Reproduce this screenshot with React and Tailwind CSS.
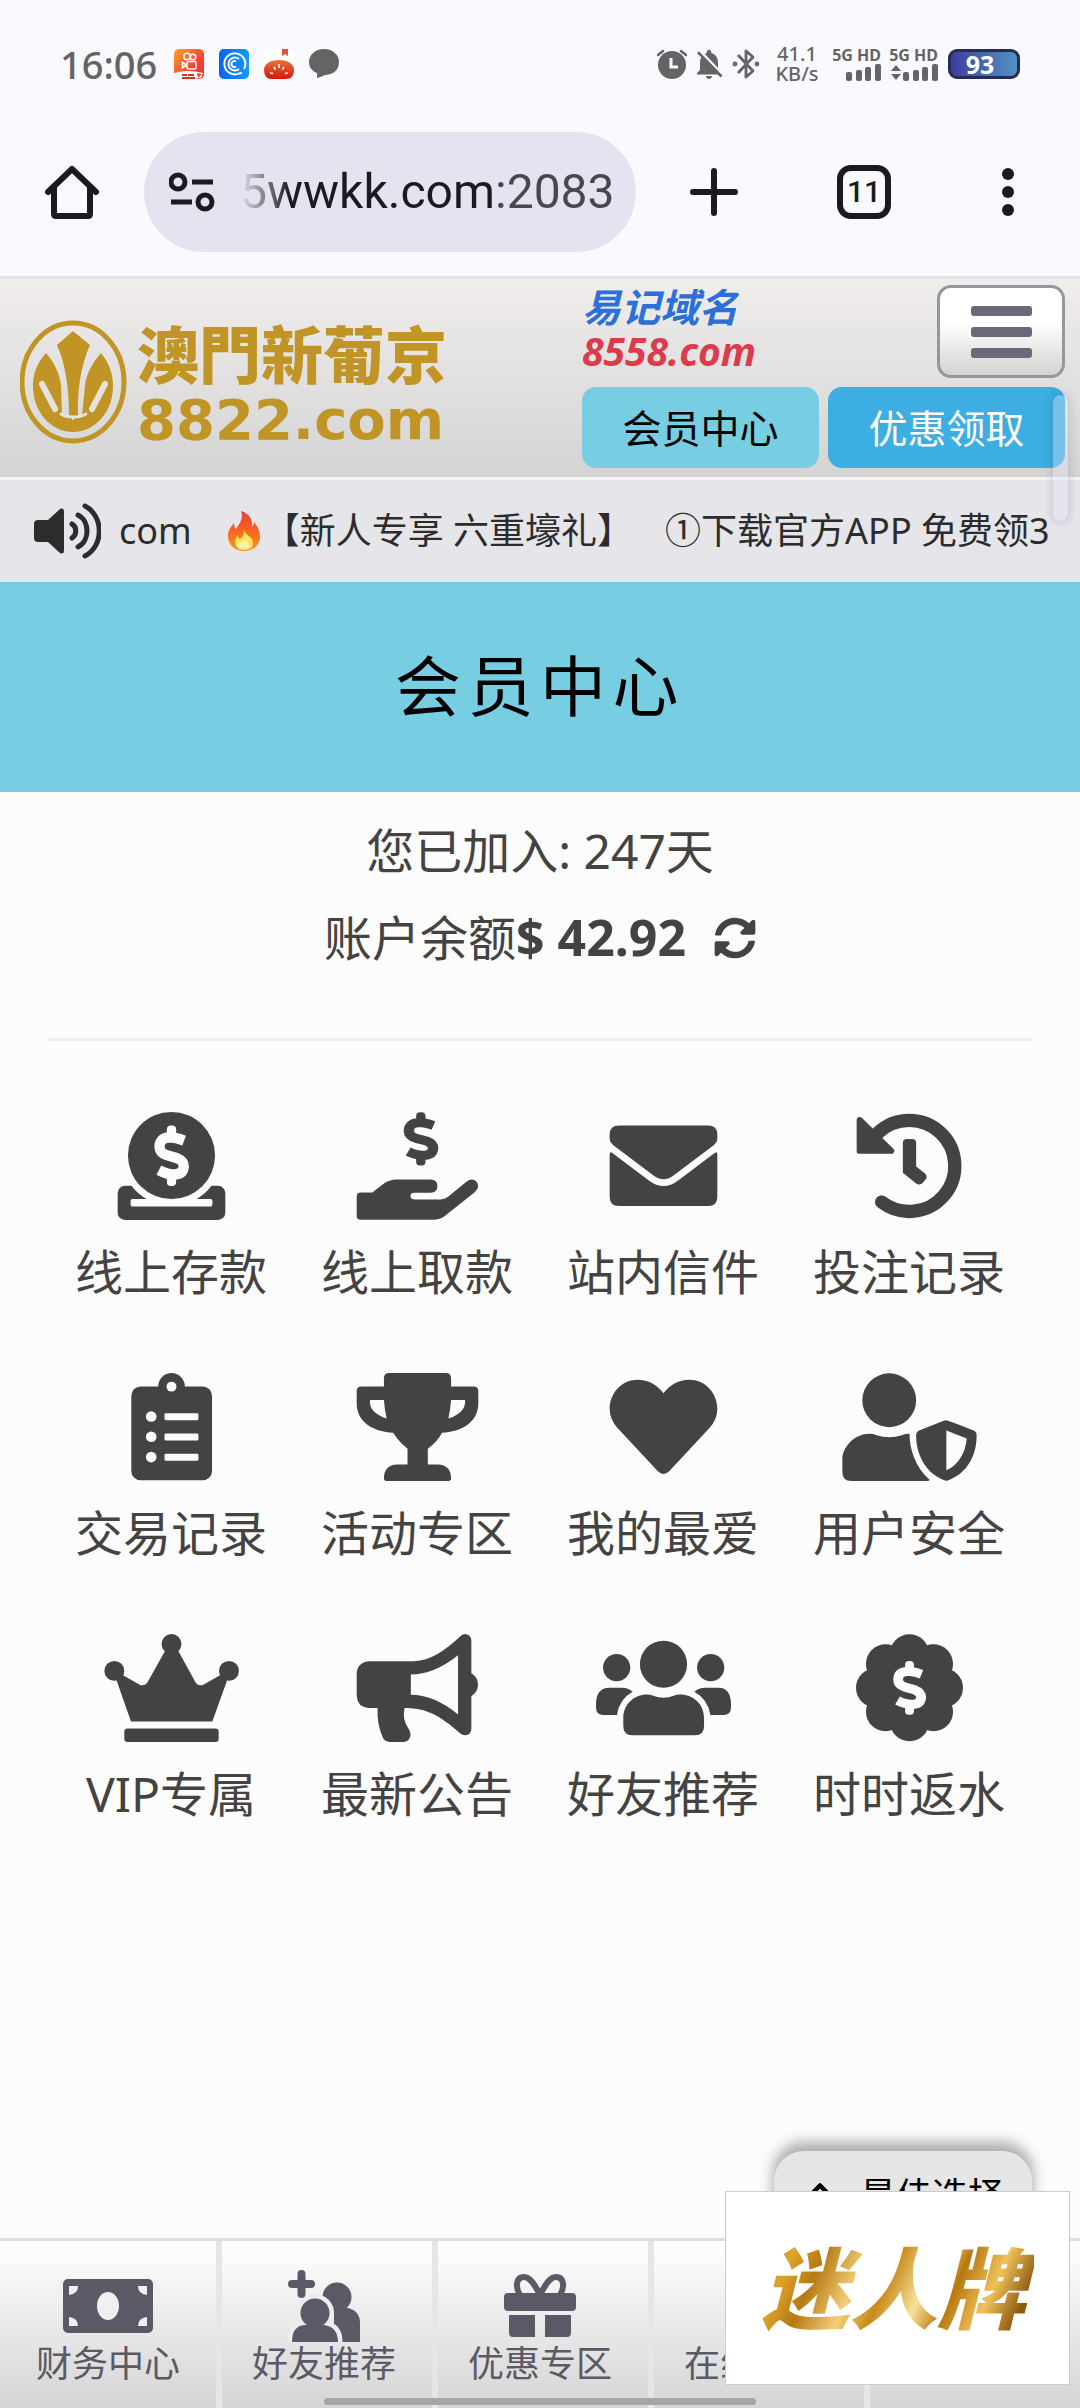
import { MdNotificationsOff } from "react-icons/md";
import { FaSyncAlt } from "react-icons/fa";
import { ChevronUp } from "lucide-react";

const PAPER = "#fcfcfc";

const DollarMark = ({ transform, color }) => (
  <g transform={transform} fill={color}>
    <rect x="-14" y="-91" width="28" height="40" rx="12" />
    <rect x="-14" y="51" width="28" height="40" rx="12" />
    <path
      d="M38 -46Q12 -56 -6 -56Q-36 -54 -36 -27Q-36 -10 -14 -2L17 7Q37 15 37 32Q35 56 6 56Q-14 56 -38 43"
      fill="none"
      stroke={color}
      strokeWidth="31"
    />
  </g>
);

const MenuIcon = ({ viewBox, children }) => (
  <svg viewBox={viewBox} className="h-[108px] w-[135px]" fill="currentColor" aria-hidden="true">
    {children}
  </svg>
);

const DepositIcon = () => (
  <MenuIcon viewBox="190 97 406 325">
    <rect x="231" y="319" width="324" height="103" rx="22" />
    <rect x="270" y="359" width="246" height="22" rx="5" fill={PAPER} />
    <circle cx="393" cy="228" r="151" fill={PAPER} />
    <circle cx="393" cy="228" r="131" />
    <DollarMark transform="translate(393 229)" color={PAPER} />
  </MenuIcon>
);

const WithdrawIcon = () => (
  <MenuIcon viewBox="928 97 406 325">
    <DollarMark transform="translate(1141 178) scale(1 0.88)" color="currentColor" />
    <path d="M948 351Q948 339 960 339H995L1028 314Q1046 300 1068 300H1170Q1191 300 1191 320Q1191 340 1170 340H1122Q1110 340 1110 350Q1110 360 1122 360H1200Q1212 360 1222 353L1279 306Q1296 294 1309 307Q1320 322 1304 338L1216 408Q1200 421 1183 421H960Q948 421 948 409Z" />
  </MenuIcon>
);

const MailIcon = () => (
  <MenuIcon viewBox="166 97 406 325">
    <path d="M207 165Q207 138 235 138H503Q531 138 531 165V178Q531 188 521 196L400 287Q369 311 338 287L217 196Q207 188 207 178Z" />
    <path d="M207 224Q207 214 216 221L325 303Q369 337 413 303L522 221Q531 214 531 224V352Q531 380 503 380H235Q207 380 207 352Z" />
  </MenuIcon>
);

const HistoryIcon = () => (
  <MenuIcon viewBox="904 97 406 325">
    <path
      d="M1023 368A137 137 0 1 0 1012 160"
      fill="none"
      stroke="currentColor"
      strokeWidth="40"
      strokeLinecap="round"
    />
    <path
      d="M957 121L1052 214H957Z"
      stroke="currentColor"
      strokeWidth="18"
      strokeLinejoin="round"
    />
    <path d="M1087 190Q1087 178 1099 178H1115Q1127 178 1127 190V261L1153 281Q1163 290 1155 301L1148 309Q1138 320 1127 312L1087 280Z" />
  </MenuIcon>
);

const RecordIcon = () => (
  <MenuIcon viewBox="190 880 406 325">
    <rect x="272" y="921" width="243" height="282" rx="28" />
    <circle cx="393" cy="920" r="40" />
    <circle cx="393" cy="921" r="15" fill={PAPER} />
    {[1011, 1072, 1133].map((y) => (
      <g key={y} fill={PAPER}>
        <circle cx="332" cy={y} r="16" />
        <rect x="372" y={y - 10} width="102" height="21" rx="4" />
      </g>
    ))}
  </MenuIcon>
);

const TrophyIcon = () => (
  <MenuIcon viewBox="928 880 406 325">
    <path d="M1030 896Q1030 880 1046 880H1216Q1232 880 1232 896V921H1300Q1314 921 1314 935V970C1314 1030 1262 1056 1205 1060Q1190 1088 1162 1108V1155H1192Q1232 1157 1232 1197Q1232 1205 1224 1205H1038Q1030 1205 1030 1197Q1030 1157 1070 1155H1101V1108Q1075 1088 1058 1060C1000 1056 948 1030 948 970V935Q948 921 962 921H1030Z" />
    <g fill={PAPER}>
      <path d="M988 961H1030Q1032 990 1038 1017Q990 1000 988 970Z" />
      <path d="M1274 961H1232Q1230 990 1224 1017Q1272 1000 1274 970Z" />
    </g>
  </MenuIcon>
);

const HeartIcon = () => (
  <MenuIcon viewBox="166 880 406 325">
    <path d="M369 941C350 915 322 900 292 900C243 900 207 940 207 988Q207 1020 232 1047L352 1176Q369 1192 386 1176L506 1047Q531 1020 531 988C531 940 495 900 446 900C416 900 388 915 369 941Z" />
  </MenuIcon>
);

const SecurityIcon = () => (
  <MenuIcon viewBox="904 880 406 325">
    <circle cx="1046" cy="962" r="81" />
    <path d="M905 1140C905 1100 945 1063 985 1063Q1000 1063 1008 1067Q1046 1080 1084 1067Q1095 1063 1107 1063C1107 1110 1125 1165 1168 1202Q1166 1205 1160 1205H932Q905 1205 905 1178Z" />
    <path d="M1218 1022Q1222 1022 1300 1053Q1309 1057 1309 1068C1309 1130 1280 1180 1226 1202Q1218 1206 1210 1202C1155 1180 1127 1125 1127 1068Q1127 1057 1136 1053L1210 1024Q1214 1022 1218 1022Z" />
    <path d="M1218 1053L1279 1077C1276 1120 1255 1155 1218 1173Z" fill={PAPER} />
  </MenuIcon>
);

const CrownIcon = () => (
  <MenuIcon viewBox="190 223 406 325">
    <circle cx="393" cy="253" r="30" />
    <circle cx="221" cy="334" r="30" />
    <circle cx="566" cy="334" r="30" />
    <path d="M376 270L320 370Q310 382 296 375L247 347L226 358L271 486H516L562 358L539 347L490 375Q474 382 466 370L411 270Z" />
    <rect x="251" y="507" width="284" height="41" rx="10" />
  </MenuIcon>
);

const NoticeIcon = () => (
  <MenuIcon viewBox="928 223 406 325">
    <path d="M988 305H1120C1170 303 1210 276 1260 230Q1267 223 1274 223Q1293 225 1293 243V341Q1313 352 1313 376Q1313 398 1293 410V508Q1293 526 1274 528Q1266 528 1258 521C1200 470 1160 446 1092 446Q1084 482 1105 510Q1116 528 1103 543Q1098 548 1088 548H1048Q1032 548 1026 534Q1008 490 1011 446H988Q948 444 948 404V345Q948 307 988 305Z" />
    <path d="M1111 345Q1180 345 1253 287V465Q1180 406 1111 406Z" fill={PAPER} />
  </MenuIcon>
);

const FriendsIcon = () => (
  <MenuIcon viewBox="166 223 406 325">
    <circle cx="369" cy="314" r="71" />
    <circle cx="228" cy="324" r="41" />
    <circle cx="511" cy="324" r="41" />
    <path d="M248 475C248 435 280 405 320 405Q330 405 338 409Q369 421 400 409Q408 405 418 405C460 405 491 435 491 475V500Q491 528 464 528H275Q248 528 248 500Z" />
    <path d="M166 430Q168 386 205 385H245Q263 385 276 397Q235 420 229 467H186Q166 465 166 445Z" />
    <path d="M572 430Q570 386 535 385H494Q475 385 462 397Q503 420 510 467H552Q572 465 572 445Z" />
  </MenuIcon>
);

const petals = [
  [1107, 283],
  [1179, 313],
  [1209, 385],
  [1179, 457],
  [1107, 487],
  [1035, 457],
  [1005, 385],
  [1035, 313],
];

const RebateIcon = () => (
  <MenuIcon viewBox="904 223 406 325">
    {petals.map(([x, y]) => (
      <circle key={`${x}-${y}`} cx={x} cy={y} r="59" />
    ))}
    <circle cx="1107" cy="385" r="105" />
    <DollarMark transform="translate(1107 385) scale(0.95 0.89)" color={PAPER} />
  </MenuIcon>
);

const menuItems = [
  { label: "线上存款", Icon: DepositIcon },
  { label: "线上取款", Icon: WithdrawIcon },
  { label: "站内信件", Icon: MailIcon },
  { label: "投注记录", Icon: HistoryIcon },
  { label: "交易记录", Icon: RecordIcon },
  { label: "活动专区", Icon: TrophyIcon },
  { label: "我的最爱", Icon: HeartIcon },
  { label: "用户安全", Icon: SecurityIcon },
  { label: "VIP专属", Icon: CrownIcon },
  { label: "最新公告", Icon: NoticeIcon },
  { label: "好友推荐", Icon: FriendsIcon },
  { label: "时时返水", Icon: RebateIcon },
];

const Signal = ({ arrows }) => (
  <div className="flex w-12 flex-col items-end">
    <span className="text-[16px] leading-[17px] font-bold whitespace-nowrap">5G HD</span>
    <svg viewBox="0 0 48 17" className="h-[17px] w-12" fill="currentColor" aria-hidden="true">
      <rect x="13" y="8" width="6" height="9" rx="2" />
      <rect x="23" y="6" width="6" height="11" rx="2" />
      <rect x="32" y="3" width="6" height="14" rx="2" />
      <rect x="42" y="0" width="6" height="17" rx="2" />
      {arrows && <path d="M1 7L6 1L11 7ZM1 10L6 16L11 10Z" />}
    </svg>
  </div>
);

const StatusBar = () => (
  <div className="flex h-32 items-center pr-[60px] pl-[60px] text-[#646464]">
    <span className="w-[114px] text-[38px] leading-[44px] font-medium">16:06</span>
    <div className="flex gap-[15px]">
      <svg viewBox="0 0 30 30" className="size-[30px]" aria-hidden="true">
        <defs>
          <linearGradient id="camera" x1="0" y1="0" x2="1" y2="1">
            <stop offset="0" stopColor="#fba52c" />
            <stop offset="0.6" stopColor="#f9452f" />
            <stop offset="1" stopColor="#f3253c" />
          </linearGradient>
        </defs>
        <rect width="30" height="30" rx="5" fill="url(#camera)" />
        <g fill="none" stroke="#fff" strokeWidth="1.6">
          <circle cx="13" cy="7.500" r="3.200" />
          <circle cx="19" cy="8" r="2.700" />
          <rect x="13" y="12.500" width="9" height="7.500" rx="1.500" />
          <path d="M12.500 16L8.500 13.500V19Z" />
        </g>
        <path d="M0 24Q14 20 29 24L27 29Q14 31 4 30Q0 29 0 25Z" fill="#fff" />
        <path d="M8 26H13M14 26H20M8 29H21" stroke="#c8352c" strokeWidth="2" />
        <path d="M23 24L28 25L24 29Z" fill="#e8472f" />
      </svg>
      <svg viewBox="0 0 30 30" className="size-[30px]" aria-hidden="true">
        <defs>
          <linearGradient id="ring" x1="0" y1="0" x2="1" y2="0">
            <stop offset="0" stopColor="#0a63f2" />
            <stop offset="1" stopColor="#149bf8" />
          </linearGradient>
        </defs>
        <rect width="30" height="30" rx="5" fill="url(#ring)" />
        <g fill="none" stroke="#fff" strokeWidth="1.900">
          <path d="M25 20A10.500 10.500 0 1 0 20 24.500L23 24" />
          <path d="M20 10A6.500 6.500 0 1 0 20 20" />
          <path d="M17 12.500A3 3 0 1 0 17 17.500" />
        </g>
      </svg>
      <svg viewBox="0 0 30 30" className="size-[30px]" aria-hidden="true">
        <defs>
          <linearGradient id="tomato" x1="0" y1="0" x2="0" y2="1">
            <stop offset="0" stopColor="#ea7237" />
            <stop offset="1" stopColor="#d0180c" />
          </linearGradient>
        </defs>
        <rect width="30" height="30" rx="5" fill="#fff" />
        <path d="M18 0H24V7L21 5L18 7Z" fill="#d65a3a" />
        <path d="M15 11C24 11 30 15 30 21Q30 30 22 30H8Q0 30 0 21C0 15 6 11 15 11Z" fill="url(#tomato)" />
        <path d="M15 15V19M10 18L11.500 20.500M20 18L18.500 20.500M6 24L9 24.500M24 24L21 24.500" stroke="#fff" strokeWidth="1.600" />
      </svg>
      <svg viewBox="0 0 30 30" className="size-[30px]" fill="currentColor" aria-hidden="true">
        <path d="M15 0C24 0 30 6 30 13C30 21 24 26 16 26Q12 28 8 29V24C3 22 0 18 0 13C0 6 6 0 15 0Z" />
      </svg>
    </div>
    <div className="ml-auto flex items-center">
      <svg viewBox="0 0 30 30" className="size-[30px]" aria-hidden="true">
        <circle cx="15" cy="16" r="14" fill="currentColor" />
        <path d="M1 6L6 2M29 6L24 2" stroke="currentColor" strokeWidth="2.500" strokeLinecap="round" />
        <path d="M14 9V18H21" fill="none" stroke="#f9f9ff" strokeWidth="3" />
      </svg>
      <MdNotificationsOff className="ml-1 size-9" />
      <svg
        viewBox="0 0 30 30"
        className="ml-1 size-[30px]"
        fill="none"
        stroke="currentColor"
        strokeWidth="2.800"
        aria-hidden="true"
      >
        <path d="M7 6L22 22L15 28V2L22 8L7 24" strokeLinejoin="round" />
        <circle cx="4" cy="15" r="1" />
        <circle cx="26" cy="15" r="1" />
      </svg>
      <div className="ml-3 flex w-12 flex-col items-center text-[20px] leading-[20px] font-medium">
        <span>41.1</span>
        <span>KB/s</span>
      </div>
      <div className="ml-3 flex gap-[9px]">
        <Signal />
        <Signal arrows />
      </div>
      <div className="ml-[10px] flex h-[30px] w-[72px] items-center justify-center rounded-[9px] border-[3px] border-[#272c57] bg-linear-to-r from-[#3f3ca0] to-[#5092c2] pr-2 text-[25px] leading-[24px] font-bold text-white">
        93
      </div>
    </div>
  </div>
);

const BrowserBar = () => (
  <div className="flex h-[148px] items-start pt-1 text-[#1a1b21]">
    <button type="button" aria-label="主页" className="flex h-[120px] w-36 items-center justify-center">
      <svg viewBox="0 0 54 54" className="size-[54px]" fill="none" stroke="currentColor" strokeWidth="6" aria-hidden="true">
        <path d="M3 27L27 4L51 27" strokeLinecap="round" strokeLinejoin="round" />
        <path d="M9 22V49Q9 51 11 51H43Q45 51 45 49V22" />
      </svg>
    </button>
    <div className="flex h-[120px] min-w-0 flex-1 items-center rounded-full bg-[#e4e4f0] pl-[25px]">
      <svg viewBox="0 0 46 40" className="h-10 w-[46px] shrink-0" fill="none" stroke="currentColor" strokeWidth="5" aria-hidden="true">
        <circle cx="9" cy="10" r="7" />
        <path d="M23 10H44M2 30H23" />
        <circle cx="36" cy="30" r="7" />
      </svg>
      <input
        type="text"
        readOnly
        aria-label="网址"
        defaultValue="5wwkk.com:2083"
        className="ml-[25px] h-16 w-full min-w-0 bg-[linear-gradient(90deg,#1a1b21_250px,#474751_254px)] bg-clip-text font-[Roboto,sans-serif] text-[48px] leading-[64px] text-transparent outline-none [mask-image:linear-gradient(90deg,transparent,#000_50px)]"
      />
    </div>
    <button type="button" aria-label="新建标签页" className="flex h-[120px] w-[156px] items-center justify-center">
      <svg viewBox="0 0 48 48" className="size-12" stroke="currentColor" strokeWidth="6" strokeLinecap="round" aria-hidden="true">
        <path d="M24 3V45M3 24H45" />
      </svg>
    </button>
    <button type="button" aria-label="标签页" className="flex h-[120px] w-36 items-center justify-center">
      <span className="flex size-[54px] items-center justify-center rounded-[14px] border-6 border-[#1a1b21] font-[Roboto,sans-serif] text-[30px] leading-[42px] font-medium">
        11
      </span>
    </button>
    <button type="button" aria-label="更多" className="flex h-[120px] w-36 flex-col items-center justify-center gap-[6px]">
      <span className="size-3 rounded-full bg-[#1a1b21]" />
      <span className="size-3 rounded-full bg-[#1a1b21]" />
      <span className="size-3 rounded-full bg-[#1a1b21]" />
    </button>
  </div>
);

const Logo = () => (
  <a href="#home" className="flex items-center gap-[10px] pt-[10px] text-[#c19426]">
    <svg viewBox="0 0 107 124" className="h-[124px] w-[107px] shrink-0" aria-hidden="true">
      <ellipse cx="53" cy="62" rx="51" ry="59" fill="none" stroke="currentColor" strokeWidth="5" />
      <path
        d="M26 33C16 44 13 55 13 66C13 92 31 112 53 112C75 112 93 92 93 66C93 55 90 44 81 33C73 42 66 54 65 66L62 96H58C57 70 61 45 70 25L53 11L37 25C46 45 49 70 49 96H42L41 66C40 54 34 42 26 33Z"
        fill="currentColor"
      />
      <g fill="none" stroke="#e6e2e0" strokeLinecap="round">
        <path d="M53 98V99" strokeWidth="2" />
        <path d="M41 94C47 98 59 98 66 94" strokeWidth="3" />
        <path d="M22 64L35 89M85 64L72 89" strokeWidth="6" />
      </g>
    </svg>
    <span className="flex flex-col">
      <span className="font-['Noto_Sans_CJK_TC',sans-serif] text-[62px] leading-[76px] font-black whitespace-nowrap">
        澳門新葡京
      </span>
      <span className="font-['DejaVu_Sans',sans-serif] text-[56px] leading-[60px] font-bold">8822.com</span>
    </span>
  </a>
);

const Header = () => (
  <header className="relative flex justify-between bg-linear-to-b from-[#f0edec] to-[#d4d4d4] pt-[6px] pr-[15px] pb-[9px] pl-[20px]">
    <Logo />
    <div className="w-[483px]">
      <div className="flex items-start justify-between">
        <p className="text-[39px] leading-[44px] font-bold italic">
          <span className="block text-[#2a70d8]">易记域名</span>
          <span className="block text-[#dc3b4b]">8558.com</span>
        </p>
        <button
          type="button"
          aria-label="菜单"
          className="flex h-[93px] w-32 flex-col items-center justify-center gap-[11px] rounded-[14px] border-[3px] border-[#94979c] bg-linear-to-b from-white from-40% to-[#d3d3d1]"
        >
          <span className="h-[10px] w-[61px] rounded-[3px] bg-[#696979]" />
          <span className="h-[10px] w-[61px] rounded-[3px] bg-[#696979]" />
          <span className="h-[10px] w-[61px] rounded-[3px] bg-[#696979]" />
        </button>
      </div>
      <div className="mt-[9px] grid grid-cols-2 gap-[9px] text-[39px] leading-[44px]">
        <button type="button" className="h-[81px] rounded-[14px] bg-[#77cee2] text-black">
          会员中心
        </button>
        <button type="button" className="h-[81px] rounded-[14px] bg-[#3caee2] text-white">
          优惠领取
        </button>
      </div>
    </div>
    {/* scroll thumb */}
    <span className="absolute top-[116px] right-3 z-10 h-[126px] w-[15px] rounded-full bg-[#e2e4fa]/35 shadow-[0_0_6px_3px_rgba(60,60,90,0.12)]" />
  </header>
);

const FireIcon = () => (
  <svg viewBox="0 0 32 40" className="ml-9 h-10 w-8 shrink-0" aria-hidden="true">
    <defs>
      <linearGradient id="flame" x1="0" y1="0" x2="0" y2="1">
        <stop offset="0" stopColor="#e8403c" />
        <stop offset="0.5" stopColor="#f9641f" />
        <stop offset="1" stopColor="#fb9a18" />
      </linearGradient>
    </defs>
    <path d="M13 0C22 3 25 9 24 16Q26 14 26 11C30 16 32 21 32 26C32 34 25 40 16 40C7 40 0 34 0 25C0 19 3 16 6 12Q6 16 8 18C11 13 16 8 13 0Z" fill="url(#flame)" />
    <path d="M16 18C16 24 25 25 25 32C25 37 21 39 16 39C11 39 7 36 7 31C7 28 8 26 10 24Q10 27 12 28C15 26 16 22 16 18Z" fill="#fde35e" />
    <path d="M16 29Q22 31 21 36Q16 40 10 36Q9 33 12 32Q15 32 16 29Z" fill="#fdf3b0" />
  </svg>
);

const Marquee = () => (
  <div className="flex h-[105px] items-center overflow-hidden border-t-[3px] border-[#f3f1f1] bg-[#e5e5ea] pl-[33px] text-[36px] leading-[48px] whitespace-nowrap text-[#2c2c2c]">
    <svg viewBox="0 0 68 56" className="h-14 w-[68px] shrink-0" fill="currentColor" aria-hidden="true">
      <path d="M5 17H15L27 6Q31 4 31 9V47Q31 52 27 50L15 39H5Q1 39 1 35V21Q1 17 5 17Z" />
      <g fill="none" stroke="currentColor" strokeWidth="5" strokeLinecap="round">
        <path d="M39 21C44 24 44 32 39 35" />
        <path d="M45 12C57 18 57 38 45 44" />
        <path d="M52 3C71 13 71 43 52 53" />
      </g>
    </svg>
    <span className="ml-[18px]">com</span>
    <FireIcon />
    <span className="ml-1">【新人专享 六重壕礼】</span>
    <span className="ml-8">①下载官方APP 免费领3</span>
  </div>
);

const Account = () => (
  <section className="mx-12 border-b-[3px] border-[#efefef] pt-[15px] pb-[57px] text-center text-[48px] leading-[87px]">
    <p>您已加入: 247天</p>
    <p className="flex items-center justify-center">
      账户余额<strong className="text-[50px]">$ 42.92</strong>
      <button type="button" aria-label="刷新余额" className="ml-7">
        <FaSyncAlt className="size-[42px]" />
      </button>
    </p>
  </section>
);

const BottomNav = () => (
  <footer className="relative">
    <div className="absolute -top-[87px] right-12 flex h-[120px] w-[258px] justify-center gap-[22px] rounded-t-[30px] bg-[#e6e6e6] pt-[21px] text-[36px] leading-[48px] text-black shadow-[0_-8px_14px_1px_rgba(0,0,0,0.32)]">
      <ChevronUp className="size-9" strokeWidth={3} />
      <span>最佳选择</span>
    </div>
    <nav className="relative grid h-[170px] grid-cols-5 border-t-[3px] border-[#dedede] bg-linear-to-b from-white to-[#d5d5d5] text-[36px] leading-[44px] text-[#5b5966]">
      <a href="#finance" className="flex flex-col items-center pt-[29px]">
        <svg viewBox="0 0 90 72" className="h-[72px] w-[90px]" aria-hidden="true">
          <rect y="9" width="90" height="54" rx="5" fill="currentColor" />
          <ellipse cx="45" cy="36" rx="11" ry="14" fill="#f0f0f0" />
          <path d="M6 16H15Q15 24 6 25ZM84 16H75Q75 24 84 25ZM6 56H15Q15 48 6 47ZM84 56H75Q75 48 84 47Z" fill="#f0f0f0" />
        </svg>
        <span>财务中心</span>
      </a>
      <a href="#invite" className="flex flex-col items-center border-l-6 border-[#e6e6e6] pt-[29px] pr-[6px]">
        <svg viewBox="0 0 72 72" className="size-[72px]" fill="currentColor" aria-hidden="true">
          <path d="M13.500 4V24M4 14H23" stroke="currentColor" strokeWidth="8" strokeLinecap="round" />
          <circle cx="49" cy="27" r="14.500" />
          <path d="M46 38H60Q72 41 72 53V72H46Z" />
          <g stroke="#ededed" strokeWidth="9">
            <circle cx="27" cy="43" r="14.500" />
            <path d="M4 72Q4 55 18 55H36Q50 57 50 72Z" />
          </g>
          <circle cx="27" cy="43" r="14.500" />
          <path d="M4 72Q4 55 18 55H36Q50 57 50 72Z" />
        </svg>
        <span>好友推荐</span>
      </a>
      <a href="#promo" className="flex flex-col items-center border-l-6 border-[#e6e6e6] pt-[29px] pr-[6px]">
        <svg viewBox="0 0 72 72" className="size-[72px]" fill="currentColor" aria-hidden="true">
          <path
            d="M36 25C31 15 26 7 20 7C12 7 11 17 16 25M36 25C41 15 46 7 52 7C60 7 61 17 56 25"
            fill="none"
            stroke="currentColor"
            strokeWidth="6"
          />
          <rect y="23" width="72" height="18" rx="4" />
          <path d="M5 45H31V67H9Q5 67 5 63ZM41 45H67V63Q67 67 63 67H41Z" />
        </svg>
        <span>优惠专区</span>
      </a>
      <a href="#service" className="flex flex-col items-center border-l-6 border-[#e6e6e6] pt-[29px] pr-[6px]">
        <span className="h-[72px]" />
        <span>在线客服</span>
      </a>
      <span className="border-l-6 border-[#e6e6e6]" />
    </nav>
    <a
      href="#game"
      className="absolute right-[10px] bottom-[23px] flex h-[194px] w-[345px] items-center justify-center border border-[#cccccc] bg-white"
    >
      <span className="bg-[linear-gradient(115deg,#a8700f_0%,#e0a52c_12%,#b57a12_22%,#f3cf7a_36%,#c98a1b_46%,#f9e29a_58%,#b8780f_68%,#eec25a_80%,#8a560c_92%,#c4892a_100%)] bg-clip-text pr-2 text-[88px] leading-[100px] font-black text-transparent italic">
        迷人牌
      </span>
    </a>
    <span className="absolute bottom-[3px] left-1/2 h-[7px] w-2/5 -translate-x-1/2 rounded-full bg-[#a5a5a5]" />
  </footer>
);

export default function App() {
  return (
    <div className="flex min-h-screen flex-col overflow-hidden bg-[#fcfcfc] font-['Noto_Sans','Noto_Sans_CJK_SC',sans-serif] text-[#444341]">
      <div className="border-b-[3px] border-[#e2e2ea] bg-[#f9f9ff]">
        <StatusBar />
        <BrowserBar />
      </div>
      <Header />
      <Marquee />
      <main className="flex-1">
        <h1 className="flex h-[210px] items-center justify-center bg-[#77cee2] pb-1 text-[66px] leading-[72px] tracking-widest text-black">
          会员中心
        </h1>
        <Account />
        <ul className="mx-12 grid grid-cols-4 gap-y-[93px] pt-[71px]">
          {menuItems.map(({ label, Icon }) => (
            <li key={label}>
              <a href={`#${label}`} className="flex flex-col items-center text-[48px] leading-[60px]">
                <Icon />
                <span className="-mb-[22px] pt-[22px]">{label}</span>
              </a>
            </li>
          ))}
        </ul>
      </main>
      <BottomNav />
    </div>
  );
}
